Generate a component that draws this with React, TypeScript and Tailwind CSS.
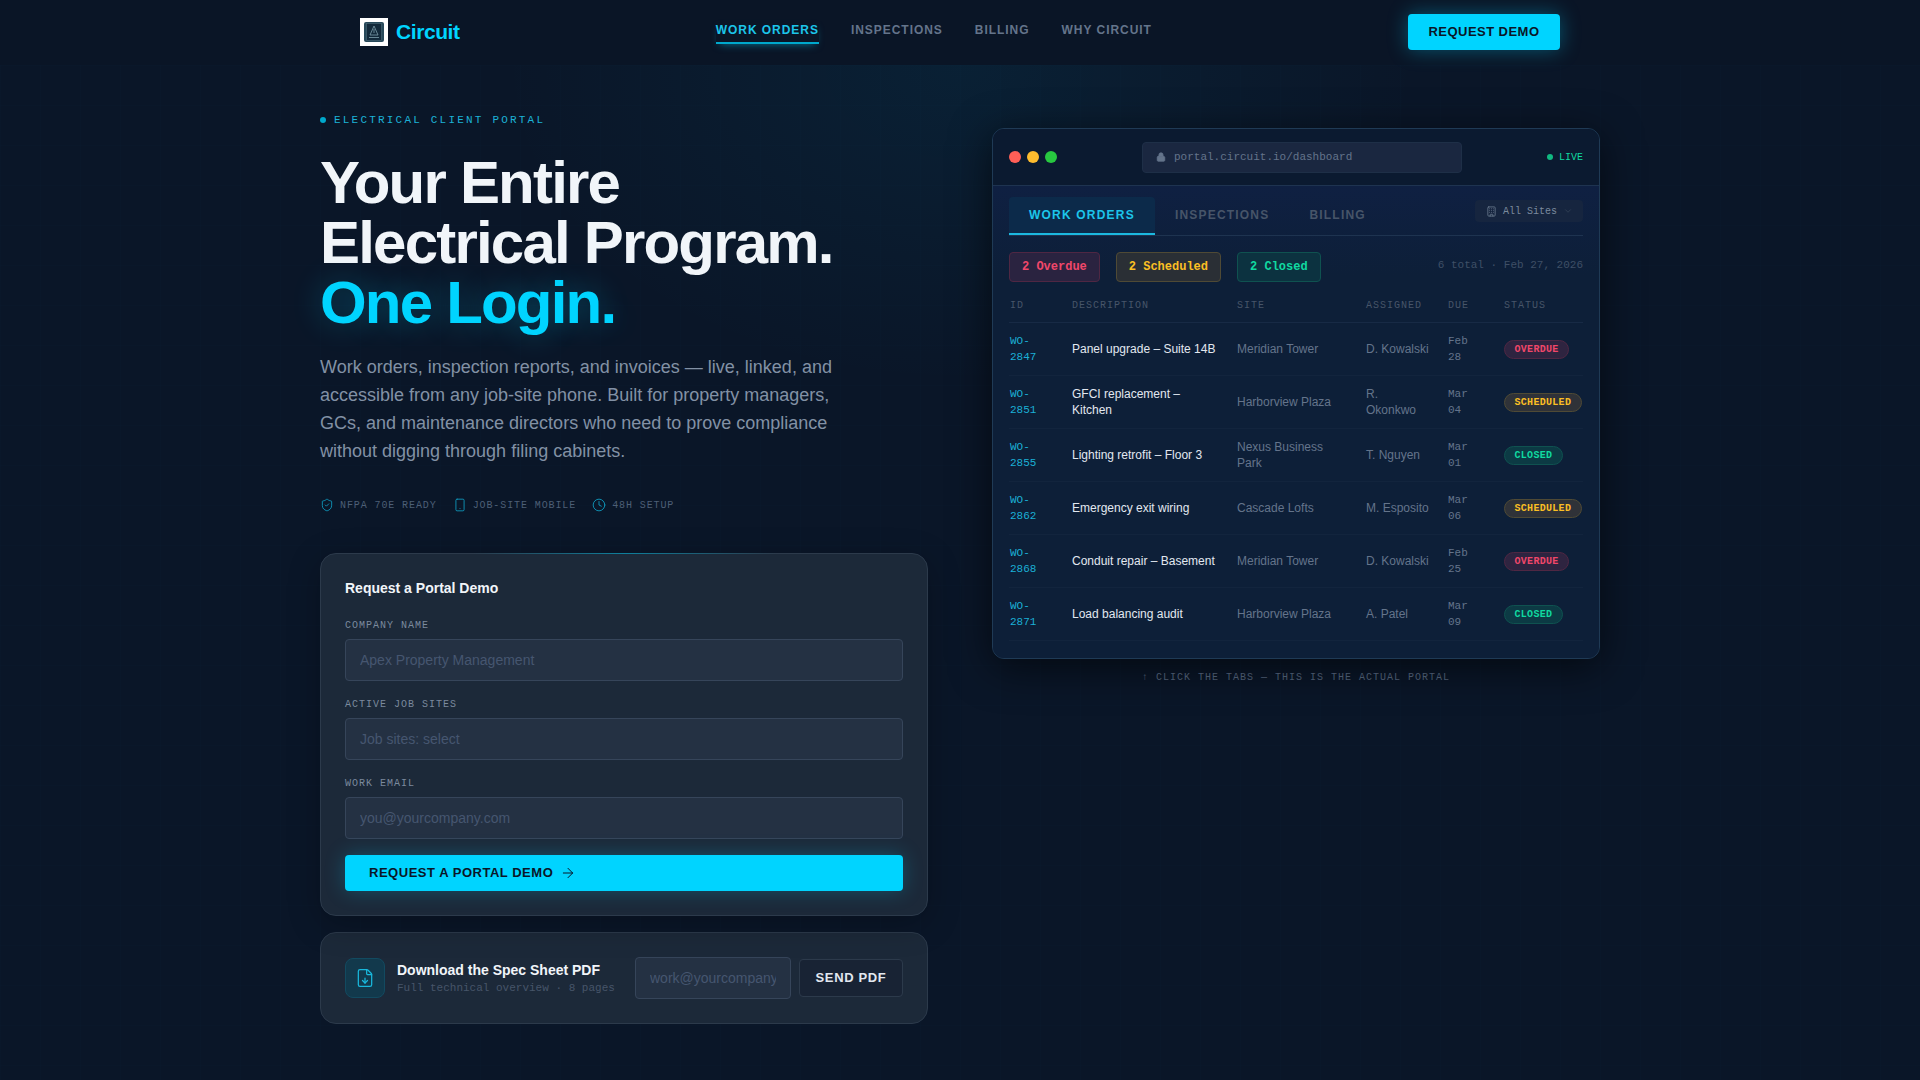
import { ArrowRight, Building, ChevronDown, Clock, FileDown, Lock, ShieldCheck, Smartphone } from "lucide-react";

type Status = "OVERDUE" | "SCHEDULED" | "CLOSED";

const rows: { id: string; desc: string; site: string; who: string; due: string; status: Status }[] = [
  { id: "WO-2847", desc: "Panel upgrade – Suite 14B", site: "Meridian Tower", who: "D. Kowalski", due: "Feb 28", status: "OVERDUE" },
  { id: "WO-2851", desc: "GFCI replacement – Kitchen", site: "Harborview Plaza", who: "R. Okonkwo", due: "Mar 04", status: "SCHEDULED" },
  { id: "WO-2855", desc: "Lighting retrofit – Floor 3", site: "Nexus Business Park", who: "T. Nguyen", due: "Mar 01", status: "CLOSED" },
  { id: "WO-2862", desc: "Emergency exit wiring", site: "Cascade Lofts", who: "M. Esposito", due: "Mar 06", status: "SCHEDULED" },
  { id: "WO-2868", desc: "Conduit repair – Basement", site: "Meridian Tower", who: "D. Kowalski", due: "Feb 25", status: "OVERDUE" },
  { id: "WO-2871", desc: "Load balancing audit", site: "Harborview Plaza", who: "A. Patel", due: "Mar 09", status: "CLOSED" },
];

const badgeStyles: Record<Status, string> = {
  OVERDUE: "bg-[#2e2440] border-[#4f2743] text-[#f0476a]",
  SCHEDULED: "bg-[#2f3238] border-[#4f4a35] text-[#fbbf24]",
  CLOSED: "bg-[#0c3a44] border-[#0f5250] text-[#10d9a0]",
};

const fields = [
  { label: "COMPANY NAME", placeholder: "Apex Property Management" },
  { label: "ACTIVE JOB SITES", placeholder: "Job sites: select" },
  { label: "WORK EMAIL", placeholder: "you@yourcompany.com" },
];

function Logo() {
  return (
    <svg width="28" height="28" viewBox="0 0 28 28" className="shrink-0">
      <rect width="28" height="28" fill="#fff" />
      <rect x="4" y="4" width="20" height="20" rx="2" fill="#27495a" />
      <rect x="6.5" y="5.5" width="15" height="17" fill="#12293a" stroke="#4a6a78" strokeWidth="0.6" />
      <path d="M14 8 L18 17 H10 Z" fill="none" stroke="#7fa0ac" strokeWidth="0.8" />
      <path d="M14 11 v4 M9 19.5 h10" stroke="#7fa0ac" strokeWidth="0.8" />
    </svg>
  );
}

export default function App() {
  return (
    <div className="min-h-screen bg-[#0a1628] font-['Liberation_Sans',Arial,sans-serif] text-white">
      <header className="h-[65px] bg-[#0a1526]">
        <nav className="mx-auto flex h-[64px] w-[1280px] items-center justify-between px-10">
          <div className="flex items-center gap-2">
            <Logo />
            <span className="text-[21px] font-bold tracking-[-0.02em] text-[#00d4ff]">Circuit</span>
          </div>
          <div className="flex items-center gap-8 text-[12px] font-bold tracking-[0.08em] text-[#64748b]">
            <a className="border-b-2 border-[#00a8cc] pb-[3px] text-[#1cc5ea] shadow-[0_4px_8px_-4px_rgba(0,212,255,0.5)]">WORK ORDERS</a>
            <a className="border-b-2 border-transparent pb-[3px]">INSPECTIONS</a>
            <a className="border-b-2 border-transparent pb-[3px]">BILLING</a>
            <a className="border-b-2 border-transparent pb-[3px]">WHY CIRCUIT</a>
          </div>
          <button className="h-9 w-[152px] rounded-[4px] bg-[#00d4ff] text-[13px] font-bold tracking-[0.035em] text-[#0a1628] shadow-[0_0_20px_rgba(0,212,255,0.35)]">
            REQUEST DEMO
          </button>
        </nav>
      </header>

      <main className="min-h-[1015px] bg-[radial-gradient(ellipse_460px_320px_at_50%_0%,rgba(0,170,220,0.07),transparent_100%),linear-gradient(rgba(0,212,255,0.006)_1px,transparent_1px),linear-gradient(90deg,rgba(0,212,255,0.006)_1px,transparent_1px)] bg-[size:100%_100%,40px_40px,40px_40px]">
        <div className="mx-auto flex w-[1280px] items-start gap-16 pt-[47px] pb-14">
          {/* left column */}
          <section className="w-[608px] shrink-0">
            <div className="flex items-center gap-2 font-['Liberation_Mono',monospace] text-[11px] leading-4 tracking-[0.2em] text-[#1cb2d6]">
              <span className="size-[6px] rounded-full bg-[#00a8cc]" />
              ELECTRICAL CLIENT PORTAL
            </div>
            <h1 className="mt-[25px] text-[60px] leading-[60px] font-bold tracking-[-0.03em] text-[#f1f5f9]">
              Your Entire
              <br />
              Electrical Program.
              <br />
              <span className="text-[#00d4ff] [text-shadow:0_0_30px_rgba(0,212,255,0.3)]">One Login.</span>
            </h1>
            <p className="mt-5 w-[530px] text-[18px] leading-[28px] text-[#8291a5]">
              Work orders, inspection reports, and invoices — live, linked, and accessible from any job-site phone. Built
              for property managers, GCs, and maintenance directors who need to prove compliance without digging through
              filing cabinets.
            </p>
            <div className="mt-8 flex h-4 items-center gap-4 font-['Liberation_Mono',monospace] text-[10px] tracking-[0.09em] text-[#4d5f76]">
              <span className="flex items-center gap-[6px]">
                <ShieldCheck size={14} strokeWidth={1.5} className="text-[#0f9cc0]" />
                NFPA 70E READY
              </span>
              <span className="flex items-center gap-[6px]">
                <Smartphone size={14} strokeWidth={1.5} className="text-[#0f9cc0]" />
                JOB-SITE MOBILE
              </span>
              <span className="flex items-center gap-[6px]">
                <Clock size={14} strokeWidth={1.5} className="text-[#0f9cc0]" />
                48H SETUP
              </span>
            </div>

            <form className="relative mt-10 rounded-[16px] border border-[#2c3a4b] bg-[#1c2939] p-6 shadow-[0_8px_32px_rgba(0,0,0,0.25)]">
              <div className="absolute -top-px left-[25%] h-px w-1/2 bg-[linear-gradient(90deg,transparent,#0e7f9c,transparent)]" />
              <h2 className="mb-5 text-[14px] leading-5 font-bold text-[#f1f5f9]">Request a Portal Demo</h2>
              <div className="flex flex-col gap-4">
                {fields.map((f) => (
                  <label key={f.label} className="block">
                    <span className="mb-[6px] block font-['Liberation_Mono',monospace] text-[10px] leading-[15px] tracking-[0.1em] text-[#7b8a9e]">
                      {f.label}
                    </span>
                    <input
                      placeholder={f.placeholder}
                      className="h-[42px] w-full rounded-[4px] border border-[#36455a] bg-[#243143] px-[14px] text-[14px] outline-none placeholder:text-[#465670]"
                    />
                  </label>
                ))}
                <button
                  type="button"
                  className="flex h-9 items-center gap-[7px] rounded-[4px] bg-[#00d4ff] px-6 text-[13px] font-bold tracking-[0.04em] text-[#0a1628] shadow-[0_0_20px_rgba(0,212,255,0.25)]"
                >
                  REQUEST A PORTAL DEMO
                  <ArrowRight size={16} strokeWidth={1.5} />
                </button>
              </div>
            </form>

            <div className="mt-4 flex h-[92px] items-center rounded-[16px] border border-[#2c3a4b] bg-[#1c2939] px-6">
              <div className="flex size-10 items-center justify-center rounded-[8px] border border-[#124a60] bg-[#12394c]">
                <FileDown size={20} strokeWidth={1.5} className="text-[#19b8dc]" />
              </div>
              <div className="ml-3 w-[238px]">
                <div className="text-[14px] leading-5 font-bold text-[#f1f5f9]">Download the Spec Sheet PDF</div>
                <div className="font-['Liberation_Mono',monospace] text-[11px] leading-4 text-[#475569]">
                  Full technical overview · 8 pages
                </div>
              </div>
              <input
                placeholder="work@yourcompany.com"
                className="h-[42px] w-[156px] rounded-[4px] border border-[#36455a] bg-[#243143] px-[14px] text-[14px] outline-none placeholder:text-[#465670]"
              />
              <button className="ml-2 h-[38px] w-[104px] rounded-[4px] border border-[#2c3a4b] bg-[#182334] text-[13px] font-bold tracking-[0.05em] text-[#e2e8f0]">
                SEND PDF
              </button>
            </div>
          </section>

          {/* right column */}
          <section className="mt-4 w-[608px] shrink-0">
            <div className="overflow-hidden rounded-[12px] border border-[#1f3a55] bg-[#0d1f38] shadow-[0_8px_40px_rgba(0,0,0,0.6)]">
              <div className="flex h-[57px] items-center border-b border-[#1e3350] bg-[#0b1a30] px-4">
                <span className="size-3 rounded-full bg-[#ff5f57]" />
                <span className="ml-[6px] size-3 rounded-full bg-[#febc2e]" />
                <span className="ml-[6px] size-3 rounded-full bg-[#28c840]" />
                <div className="ml-[85px] flex h-[31px] w-[320px] items-center gap-2 rounded-[4px] border border-[#1e2f47] bg-[#1a2740] px-[13px] font-['Liberation_Mono',monospace] text-[11px] text-[#64748b]">
                  <Lock size={10} fill="#64748b" />
                  portal.circuit.io/dashboard
                </div>
                <div className="ml-auto flex items-center gap-[6px] font-['Liberation_Mono',monospace] text-[10px] text-[#10d9a0]">
                  <span className="size-[6px] rounded-full bg-[#10b981]" />
                  LIVE
                </div>
              </div>

              <div className="bg-[linear-gradient(#0f2042,#0d1f38_90px)] px-4 pt-[11px] pb-[17px]">
                <div className="flex items-start justify-between border-b border-[#1e3350]">
                  <div className="flex text-[12px] leading-4 font-bold tracking-[0.1em]">
                    <span className="rounded-t-[4px] border-b-2 border-[#1cb8e0] bg-[#0c2a4a] px-5 py-[10px] text-[#1cc5ea]">WORK ORDERS</span>
                    <span className="px-5 py-[10px] text-[#475569]">INSPECTIONS</span>
                    <span className="px-5 py-[10px] text-[#475569]">BILLING</span>
                  </div>
                  <div className="mt-[3px] flex h-[22px] w-[108px] shrink-0 items-center gap-[6px] rounded-[4px] bg-[#16253f] px-[11px] font-['Liberation_Mono',monospace] text-[10px] whitespace-nowrap text-[#7b8a9e]">
                    <Building size={11} strokeWidth={1.5} className="shrink-0" />
                    All Sites
                    <ChevronDown size={10} className="shrink-0 text-[#334155]" />
                  </div>
                </div>

                <div className="mt-4 flex items-center gap-4 font-['Liberation_Mono',monospace] text-[12px] font-bold">
                  <span className="flex h-[30px] items-center rounded-[4px] border border-[#4f2743] bg-[#2a2340] px-3 text-[#f0476a]">2 Overdue</span>
                  <span className="flex h-[30px] items-center rounded-[4px] border border-[#4f4a35] bg-[#2a2f35] px-3 text-[#fbbf24]">2 Scheduled</span>
                  <span className="flex h-[30px] items-center rounded-[4px] border border-[#0f5250] bg-[#0c3240] px-3 text-[#10d9a0]">2 Closed</span>
                  <span className="mb-[3px] ml-auto text-[11px] font-normal text-[#3f4f66]">6 total · Feb 27, 2026</span>
                </div>

                <table className="mt-[6px] w-full table-fixed border-collapse text-left text-[12px] leading-4">
                  <colgroup>
                    <col className="w-[63px]" />
                    <col className="w-[164px]" />
                    <col className="w-[130px]" />
                    <col className="w-[81px]" />
                    <col className="w-[56px]" />
                    <col />
                  </colgroup>
                  <thead>
                    <tr className="border-b border-[#172a45] font-['Liberation_Mono',monospace] text-[10px] leading-[15px] tracking-[0.1em] text-[#475569]">
                      <th className="pt-[10px] pb-[9px] pl-px font-normal">ID</th>
                      <th className="pt-[10px] pb-[9px] font-normal">DESCRIPTION</th>
                      <th className="pt-[10px] pb-[9px] pl-px font-normal">SITE</th>
                      <th className="pt-[10px] pb-[9px] font-normal">ASSIGNED</th>
                      <th className="pt-[10px] pb-[9px] pl-px font-normal">DUE</th>
                      <th className="pt-[10px] pb-[9px] pl-px font-normal">STATUS</th>
                    </tr>
                  </thead>
                  <tbody>
                    {rows.map((r) => (
                      <tr key={r.id} className="h-[53px] border-b border-[#12243d]">
                        <td className="py-[10px] pr-5 pl-px font-['Liberation_Mono',monospace] text-[11px] text-[#1bb0d6]">{r.id}</td>
                        <td className="py-[10px] pr-4 text-[#e2e8f0]">{r.desc}</td>
                        <td className="py-[10px] pr-7 pl-px text-[#64748b]">{r.site}</td>
                        <td className="py-[10px] pr-[17px] text-[#64748b]">{r.who}</td>
                        <td className="py-[10px] pr-5 pl-px font-['Liberation_Mono',monospace] text-[11px] text-[#64748b]">{r.due}</td>
                        <td className="py-[10px] pl-px">
                          <span
                            className={`inline-block rounded-full border px-[9.5px] py-px align-middle font-['Liberation_Mono',monospace] text-[10px] leading-[15px] font-bold tracking-[0.03em] ${badgeStyles[r.status]}`}
                          >
                            {r.status}
                          </span>
                        </td>
                      </tr>
                    ))}
                  </tbody>
                </table>
              </div>
            </div>
            <p className="mt-[11px] text-center font-['Liberation_Mono',monospace] text-[10px] leading-[15px] tracking-[0.1em] text-[#475569]">
              ↑ CLICK THE TABS — THIS IS THE ACTUAL PORTAL
            </p>
          </section>
        </div>
      </main>
    </div>
  );
}
